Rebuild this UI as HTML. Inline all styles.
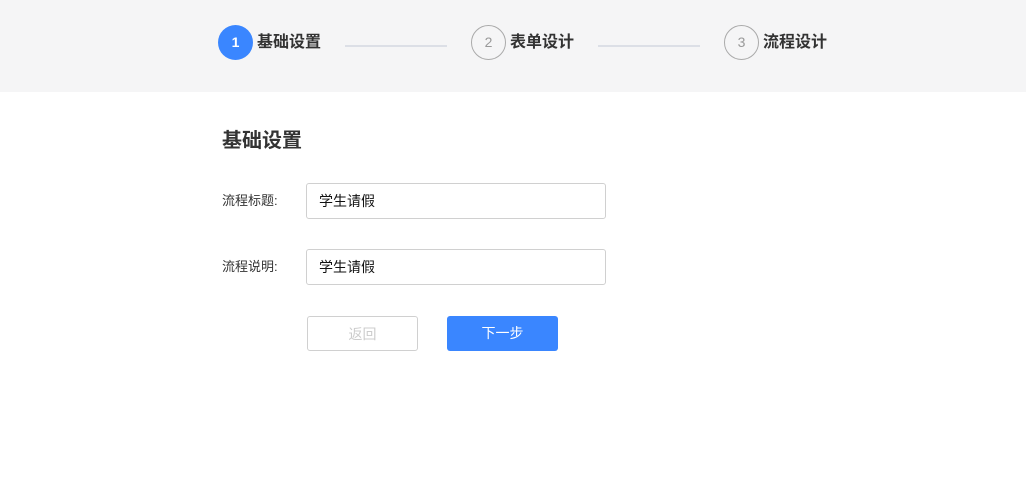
<!DOCTYPE html>
<html><head><meta charset="utf-8"><style>
*{margin:0;padding:0;box-sizing:border-box}
body{width:1026px;height:495px;background:#fff;font-family:"Liberation Sans","Noto Sans CJK SC",sans-serif;position:relative;overflow:hidden}
.top{position:absolute;left:0;top:0;width:1026px;height:92px;background:#f5f5f6}
.c{position:absolute;top:25px;width:35px;height:35px;border-radius:50%;text-align:center;line-height:33px;font-size:14px}
.c1{left:218px;background:#3a86ff;color:#fff;line-height:35px;font-weight:bold}
.c2{border:1px solid #aaa;color:#999}
.st{position:absolute;top:32px;font-size:16px;color:#333;line-height:22px;font-weight:bold}
.ln{position:absolute;top:45px;width:102px;height:2px;background:#dcdfe6}
.abs{position:absolute}
.lab{position:absolute;left:222px;font-size:13px;color:#333;line-height:17px}
.inp{position:absolute;left:306px;width:300px;height:36px;border:1px solid #d0d0d0;border-radius:3px;padding-left:12px;line-height:34px;font-size:14px;color:#111}
.btn{position:absolute;top:316px;width:111px;height:35px;border-radius:3px;text-align:center;line-height:35px;font-size:14px}
</style></head><body>
<div class="top"></div>
<div class="c c1">1</div>
<div class="st" style="left:257px">基础设置</div>
<div class="ln" style="left:345px"></div>
<div class="c c2" style="left:471px">2</div>
<div class="st" style="left:510px">表单设计</div>
<div class="ln" style="left:598px"></div>
<div class="c c2" style="left:724px">3</div>
<div class="st" style="left:763px">流程设计</div>

<div class="abs" style="left:222px;top:128px;font-size:20px;font-weight:bold;color:#333;line-height:26px">基础设置</div>
<div class="lab" style="top:192px">流程标题:</div>
<div class="inp" style="top:183px">学生请假</div>
<div class="lab" style="top:258px">流程说明:</div>
<div class="inp" style="top:249px">学生请假</div>
<div class="btn" style="left:307px;border:1px solid #d0d0d0;color:#ccc">返回</div>
<div class="btn" style="left:447px;background:#3a86ff;color:#fff">下一步</div>
</body></html>
